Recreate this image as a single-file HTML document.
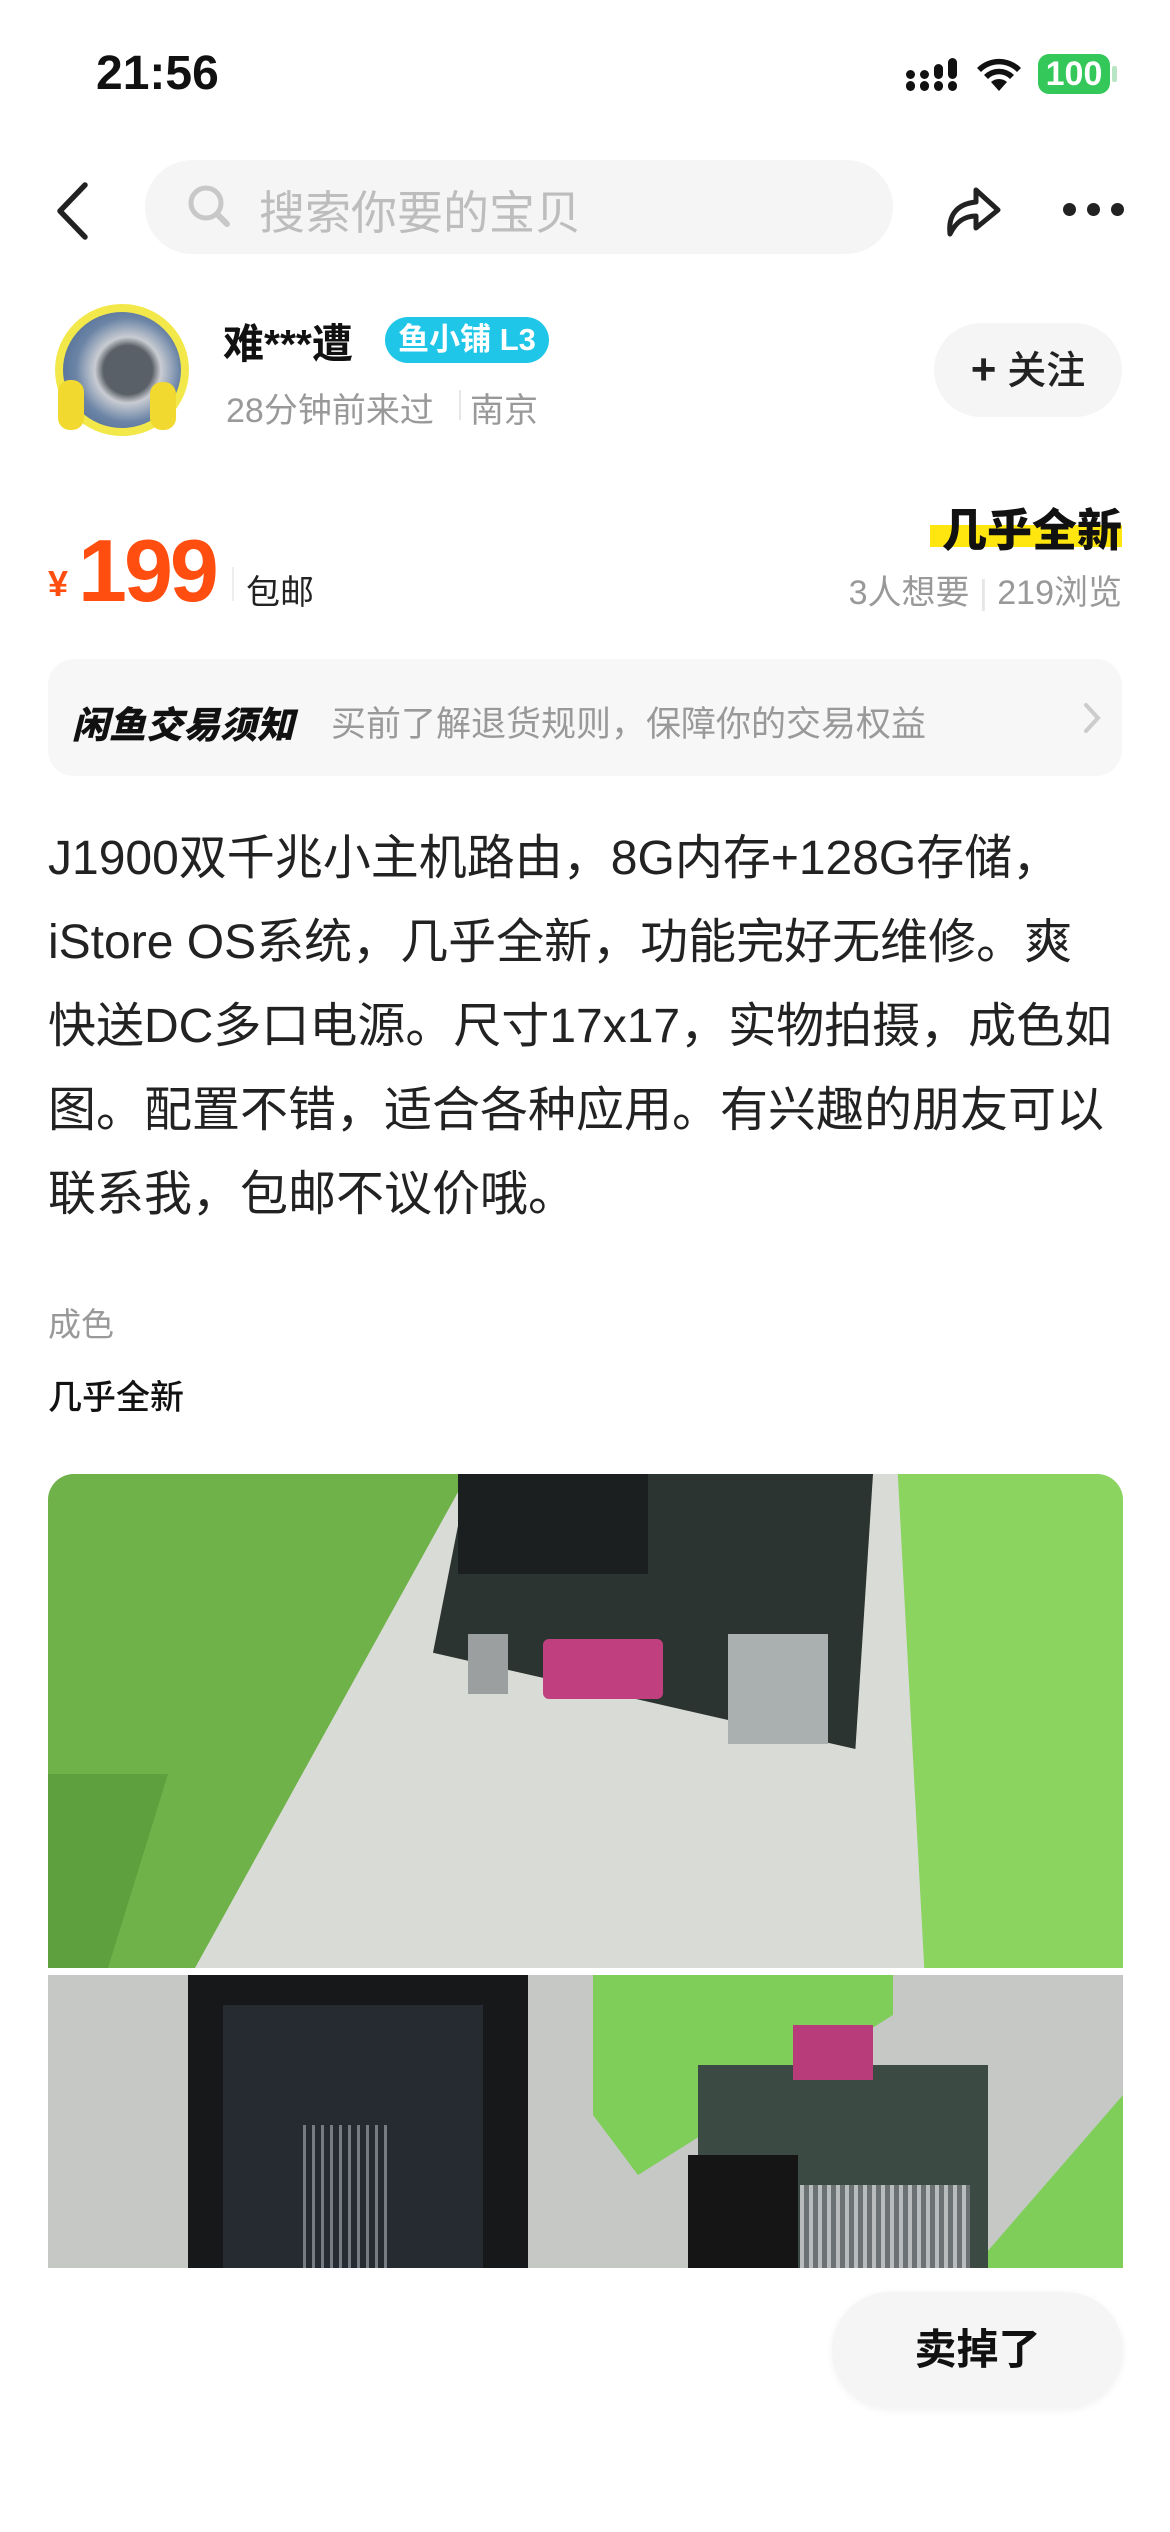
<!DOCTYPE html>
<html><head><meta charset="utf-8"><style>
*{margin:0;padding:0;box-sizing:border-box}
body{width:1170px;height:2532px;background:#fff;position:relative;overflow:hidden;font-family:"Liberation Sans","Noto Sans CJK SC",sans-serif;color:#222}
.a{position:absolute;white-space:nowrap}
</style></head><body>
<div class="a" style="left:96px;top:46px;font-size:48px;font-weight:700;color:#111">21:56</div>
<svg class="a" style="left:906px;top:58px" width="56" height="34"><g fill="#111"><rect x="0" y="23" width="9" height="10" rx="4.5"/><rect x="14" y="23" width="9" height="10" rx="4.5"/><rect x="28" y="23" width="9" height="10" rx="4.5"/><rect x="42" y="23" width="9" height="10" rx="4.5"/><rect x="0" y="12" width="9" height="9" rx="4.5"/><rect x="14" y="12" width="9" height="9" rx="4.5"/><rect x="28" y="6" width="9" height="15" rx="4.5"/><rect x="42" y="0" width="9" height="21" rx="4.5"/></g></svg>
<svg class="a" style="left:974px;top:56px" width="50" height="36" viewBox="0 0 50 36"><path d="M25 35 L17 26 A12 12 0 0 1 33 26Z M10 19 A21 21 0 0 1 40 19 L36 23 A15 15 0 0 0 14 23Z M3 12 A31 31 0 0 1 47 12 L43 16 A25 25 0 0 0 7 16Z" fill="#111"/></svg>
<div class="a" style="left:1038px;top:54px;width:72px;height:40px;background:#34c759;border-radius:11px;color:#fff;font-weight:700;font-size:34px;line-height:40px;text-align:center">100</div>
<div class="a" style="left:1112px;top:66px;width:5px;height:16px;background:#b8e6c4;border-radius:2px"></div>
<svg class="a" style="left:50px;top:180px" width="44" height="62"><path d="M35 5 L10 31 L35 57" fill="none" stroke="#222" stroke-width="5.5" stroke-linecap="round" stroke-linejoin="round"/></svg>
<div class="a" style="left:145px;top:160px;width:748px;height:94px;background:#f5f5f5;border-radius:47px"></div>
<svg class="a" style="left:186px;top:183px" width="48" height="48"><circle cx="20" cy="20" r="15" fill="none" stroke="#c8c8c8" stroke-width="5"/><path d="M31 31 L41 41" stroke="#c8c8c8" stroke-width="6" stroke-linecap="round"/></svg>
<div class="a" style="left:259px;top:177px;font-size:46px;color:#bdbdbd">搜索你要的宝贝</div>
<svg class="a" style="left:942px;top:178px" width="64" height="62" viewBox="0 0 64 62"><path d="M8 56 C6 38 14 26 34 24 L34 12 L56 32 L34 50 L34 38 C22 38 14 44 8 56Z" fill="none" stroke="#222" stroke-width="5" stroke-linejoin="round"/></svg>
<div class="a" style="left:1063px;top:203px;width:13px;height:13px;border-radius:50%;background:#222"></div>
<div class="a" style="left:1087px;top:203px;width:13px;height:13px;border-radius:50%;background:#222"></div>
<div class="a" style="left:1111px;top:203px;width:13px;height:13px;border-radius:50%;background:#222"></div>
<div class="a" style="left:55px;top:304px;width:134px;height:132px;border-radius:50%;background:#f2e84a"></div>
<div class="a" style="left:63px;top:312px;width:118px;height:116px;border-radius:50%;background:radial-gradient(circle at 55% 50%,#5a6068 0 28%,#c9ccd2 38%,#6b84a6 60%,#3f5f8c 100%)"></div>
<div class="a" style="left:58px;top:380px;width:26px;height:50px;border-radius:12px;background:#f1d930"></div>
<div class="a" style="left:150px;top:382px;width:26px;height:48px;border-radius:12px;background:#f1d930"></div>
<div class="a" style="left:223px;top:310px;font-size:41px;font-weight:700;color:#111">难***遭</div>
<div class="a" style="left:385px;top:317px;width:164px;height:46px;background:#20c6e8;border-radius:23px;color:#fff;font-size:31px;font-weight:700;line-height:46px;text-align:center">鱼小铺 L3</div>
<div class="a" style="left:226px;top:383px;font-size:34px;color:#999">28分钟前来过</div>
<div class="a" style="left:459px;top:390px;width:2px;height:30px;background:#e6e6e6"></div>
<div class="a" style="left:470px;top:383px;font-size:34px;color:#999">南京</div>
<div class="a" style="left:934px;top:323px;width:188px;height:94px;background:#f5f5f5;border-radius:47px;font-size:39px;color:#222;line-height:94px;text-align:center;font-weight:500"><b style="font-size:44px">+</b> 关注</div>
<div class="a" style="left:48px;top:563px;font-size:36px;font-weight:700;color:#ff4e0f">¥</div>
<div class="a" style="left:78px;top:520px;font-size:88px;font-weight:700;color:#ff4e0f;letter-spacing:-3px">199</div>
<div class="a" style="left:232px;top:567px;width:2px;height:34px;background:#eee"></div>
<div class="a" style="left:246px;top:565px;font-size:34px;color:#222">包邮</div>
<div class="a" style="left:930px;top:525px;width:192px;height:22px;background:#ffe60f"></div>
<div class="a" style="right:48px;top:494px;font-size:45px;font-weight:900;color:#111">几乎全新</div>
<div class="a" style="right:48px;top:565px;font-size:34px;color:#999">3人想要 <span style="color:#e6e6e6">|</span> 219浏览</div>
<div class="a" style="left:48px;top:659px;width:1074px;height:117px;background:#f7f7f7;border-radius:26px"></div>
<div class="a" style="left:72px;top:695px;font-size:37px;font-weight:900;font-style:italic;color:#111">闲鱼交易须知</div>
<div class="a" style="left:331px;top:696px;font-size:35px;color:#999">买前了解退货规则，保障你的交易权益</div>
<svg class="a" style="left:1080px;top:700px" width="24" height="36"><path d="M6 5 L18 18 L6 31" fill="none" stroke="#ccc" stroke-width="4" stroke-linecap="round"/></svg>
<div class="a" style="left:48px;top:817px;font-size:48px;line-height:84px;color:#222">J1900双千兆小主机路由，8G内存+128G存储，<br>iStore OS系统，几乎全新，功能完好无维修。爽<br>快送DC多口电源。尺寸17x17，实物拍摄，成色如<br>图。配置不错，适合各种应用。有兴趣的朋友可以<br>联系我，包邮不议价哦。</div>
<div class="a" style="left:48px;top:1298px;font-size:33px;color:#999">成色</div>
<div class="a" style="left:48px;top:1370px;font-size:34px;color:#111;font-weight:500">几乎全新</div>
<div class="a" style="left:48px;top:1474px;width:1075px;height:494px;border-radius:26px 26px 0 0;overflow:hidden;background:#d9dcd6">
 <div class="a" style="left:0;top:0;width:420px;height:494px;background:#6fb24a;clip-path:polygon(0 0,100% 0,35% 100%,0 100%)"></div>
 <div class="a" style="left:0;top:300px;width:200px;height:194px;background:#5e9f3e;clip-path:polygon(0 0,60% 0,30% 100%,0 100%)"></div>
 <div class="a" style="left:810px;top:0;width:265px;height:494px;background:#8bd460;clip-path:polygon(15% 0,100% 0,100% 100%,25% 100%)"></div>
 <div class="a" style="left:385px;top:0;width:440px;height:275px;background:#2b3430;clip-path:polygon(8% 0,100% 0,96% 100%,0 65%)"></div>
 <div class="a" style="left:410px;top:0;width:190px;height:100px;background:#1c1f1f"></div>
 <div class="a" style="left:495px;top:165px;width:120px;height:60px;background:#c0407f;border-radius:6px"></div>
 <div class="a" style="left:680px;top:160px;width:100px;height:110px;background:#aab0b0"></div>
 <div class="a" style="left:420px;top:160px;width:40px;height:60px;background:#9c9fa0"></div>
</div>
<div class="a" style="left:48px;top:1975px;width:1075px;height:293px;overflow:hidden;background:#c6c8c6">
 <div class="a" style="left:140px;top:0;width:340px;height:293px;background:#161819"></div>
 <div class="a" style="left:175px;top:30px;width:260px;height:263px;background:#262b31"></div>
 <div class="a" style="left:255px;top:150px;width:90px;height:143px;background:repeating-linear-gradient(90deg,#aab2bb 0 3px,transparent 3px 9px);opacity:.6"></div>
 <div class="a" style="left:545px;top:0;width:300px;height:200px;background:#7fce5a;clip-path:polygon(0 0,100% 0,100% 20%,15% 100%,0 70%)"></div>
 <div class="a" style="left:925px;top:120px;width:150px;height:173px;background:#7fce5a;clip-path:polygon(100% 0,100% 100%,0 100%)"></div>
 <div class="a" style="left:650px;top:90px;width:290px;height:203px;background:#3b4a42"></div>
 <div class="a" style="left:640px;top:180px;width:110px;height:113px;background:#151515"></div>
 <div class="a" style="left:752px;top:210px;width:170px;height:83px;background:repeating-linear-gradient(90deg,#b8bcbd 0 4px,#6c7273 4px 9px)"></div>
 <div class="a" style="left:745px;top:50px;width:80px;height:55px;background:#b83c79"></div>
</div>
<div class="a" style="left:832px;top:2292px;width:291px;height:116px;background:#f5f5f5;border-radius:58px;box-shadow:0 2px 8px rgba(0,0,0,.06);font-size:42px;font-weight:700;color:#111;text-align:center;line-height:116px">卖掉了</div>
</body></html>
